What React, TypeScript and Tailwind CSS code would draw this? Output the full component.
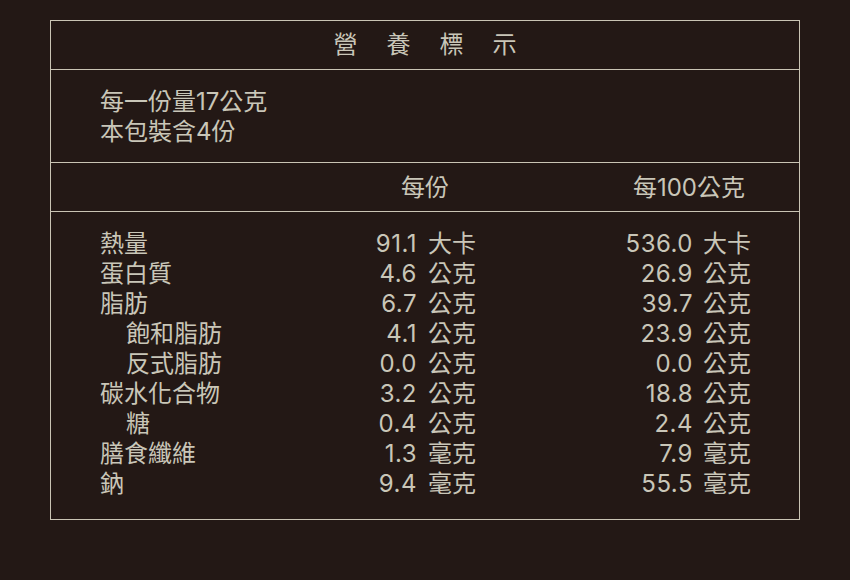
const rows = [
  { name: "熱量", indent: false, per: "91.1", perUnit: "大卡", hundred: "536.0", hundredUnit: "大卡" },
  { name: "蛋白質", indent: false, per: "4.6", perUnit: "公克", hundred: "26.9", hundredUnit: "公克" },
  { name: "脂肪", indent: false, per: "6.7", perUnit: "公克", hundred: "39.7", hundredUnit: "公克" },
  { name: "飽和脂肪", indent: true, per: "4.1", perUnit: "公克", hundred: "23.9", hundredUnit: "公克" },
  { name: "反式脂肪", indent: true, per: "0.0", perUnit: "公克", hundred: "0.0", hundredUnit: "公克" },
  { name: "碳水化合物", indent: false, per: "3.2", perUnit: "公克", hundred: "18.8", hundredUnit: "公克" },
  { name: "糖", indent: true, per: "0.4", perUnit: "公克", hundred: "2.4", hundredUnit: "公克" },
  { name: "膳食纖維", indent: false, per: "1.3", perUnit: "毫克", hundred: "7.9", hundredUnit: "毫克" },
  { name: "鈉", indent: false, per: "9.4", perUnit: "毫克", hundred: "55.5", hundredUnit: "毫克" },
];

const title = ["營", "養", "標", "示"];

export default function App() {
  return (
    <div
      className="min-h-[580px] w-[850px] bg-[#231815] px-[50px] pt-[20px] text-[24px] text-[#c9c6b8]"
      style={{ fontFamily: 'Inter, "Noto Sans CJK TC", sans-serif' }}
    >
      <div className="h-[500px] border border-[#c9c4b4]">
        <div className="flex h-[49px] items-center justify-center gap-[29px] border-b border-[#c9c4b4] leading-none">
          {title.map((c) => (
            <span key={c}>{c}</span>
          ))}
        </div>

        <div className="flex h-[93px] flex-col justify-center border-b border-[#c9c4b4] pt-[2px] pl-[49px] leading-[30px]">
          <div>每一份量17公克</div>
          <div>本包裝含4份</div>
        </div>

        <div className="flex h-[49px] items-center border-b border-[#c9c4b4] pt-[2px] leading-none">
          <div className="w-[350px]" />
          <div className="w-[48px]">每份</div>
          <div className="w-[296px] text-right">每100公克</div>
        </div>

        <div className="pt-[17px] leading-[30px]">
          {rows.map((r) => (
            <div key={r.name} className="flex">
              <div className={r.indent ? "w-[316px] pl-[75px]" : "w-[316px] pl-[49px]"}>{r.name}</div>
              <div className="w-[50px] text-right tracking-[0.5px]">{r.per}</div>
              <div className="ml-[11px] w-[48px]">{r.perUnit}</div>
              <div className="w-[217px] text-right tracking-[0.5px]">{r.hundred}</div>
              <div className="ml-[10px] w-[48px]">{r.hundredUnit}</div>
            </div>
          ))}
        </div>
      </div>
    </div>
  );
}
